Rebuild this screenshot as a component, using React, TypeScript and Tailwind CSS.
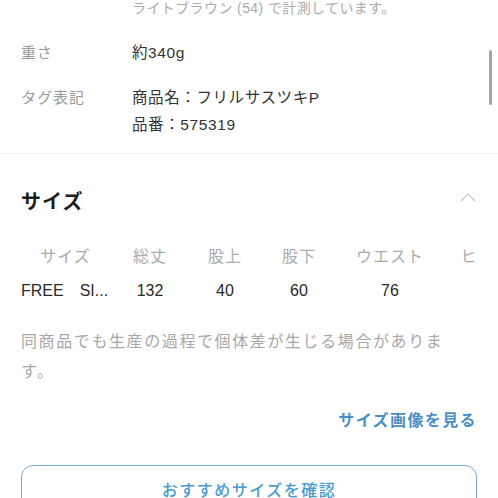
const font = "font-['Liberation_Sans','Noto_Sans_CJK_JP',sans-serif]";

const columns = [
  { label: 'サイズ', value: 'FREE　SI...', width: 'w-[89px]', left: true },
  { label: '総丈', value: '132', width: 'w-[80px]' },
  { label: '股上', value: '40', width: 'w-[70px]' },
  { label: '股下', value: '60', width: 'w-[78px]' },
  { label: 'ウエスト', value: '76', width: 'w-[104px]' },
  { label: 'ヒップ', value: '', width: 'w-[88px]' },
];

function InfoRow({ label, lines }: { label: string; lines: string[] }) {
  return (
    <div className="flex">
      <dt className="w-[111px] shrink-0 text-[15px] leading-[27px] tracking-[1px] text-[#9a9a9a]">{label}</dt>
      <dd className="text-[15.5px] leading-[27px] tracking-[0.6px] text-[#333]">
        {lines.map((l) => (
          <div key={l}>{l}</div>
        ))}
      </dd>
    </div>
  );
}

export default function App() {
  return (
    <div className={`relative h-[498px] w-[498px] overflow-hidden bg-white ${font}`}>
      <div className="px-[21px]">
        <p className="ml-[111px] text-[14px] leading-[16px] tracking-[0.4px] text-[#ababab]">
          ライトブラウン (54) で計測しています。
        </p>
        <dl className="mt-[23px] flex flex-col gap-[18px]">
          <InfoRow label="重さ" lines={['約340g']} />
          <InfoRow label="タグ表記" lines={['商品名：フリルサスツキP', '品番：575319']} />
        </dl>
      </div>

      <div className="mt-[15px] h-px bg-[#eeeeee]" />

      <section className="px-[21px]">
        <div className="mt-[34px] flex items-center justify-between">
          <h2 className="text-[20px] font-bold leading-[28px] tracking-[1px] text-[#1e1e1e]">サイズ</h2>
          <svg width="16" height="10" viewBox="0 0 16 10" className="mr-[1px] -mt-[10px]">
            <path d="M1 9 L8 2 L15 9" fill="none" stroke="#c4c4c4" strokeWidth="1.2" />
          </svg>
        </div>

        <div className="mt-[29px] overflow-hidden">
          <div className="flex w-max text-[16px] leading-[24px] tracking-[1px] text-[#ababab]">
            {columns.map((c) => (
              <div key={c.label} className={`${c.width} shrink-0 text-center`}>
                {c.label}
              </div>
            ))}
          </div>
          <div className="mt-[10px] flex w-max text-[16px] leading-[24px] text-[#2a2a2a]">
            {columns.map((c) => (
              <div key={c.label} className={`${c.width} shrink-0 ${c.left ? 'text-left' : 'text-center'}`}>
                {c.value}
              </div>
            ))}
          </div>
        </div>

        <p className="mt-[24px] w-[430px] text-[16px] leading-[30px] tracking-[1.6px] text-[#a8a8a8]">
          同商品でも生産の過程で個体差が生じる場合があります。
        </p>

        <div className="mt-[22px] flex justify-end">
          <a className="text-[16px] font-semibold leading-[24px] tracking-[1.4px] text-[#4a8fc6]">サイズ画像を見る</a>
        </div>

        <button className="mt-[32px] flex h-[52px] w-full items-center justify-center rounded-[12px] border-[1.5px] border-[#79add0] text-[16px] font-medium tracking-[1.5px] text-[#4a9bd0]">
          おすすめサイズを確認
        </button>
      </section>

      <div className="absolute left-[489px] top-[50px] h-[55px] w-[3px] rounded-full bg-[#a6a6a6]" />
    </div>
  );
}
